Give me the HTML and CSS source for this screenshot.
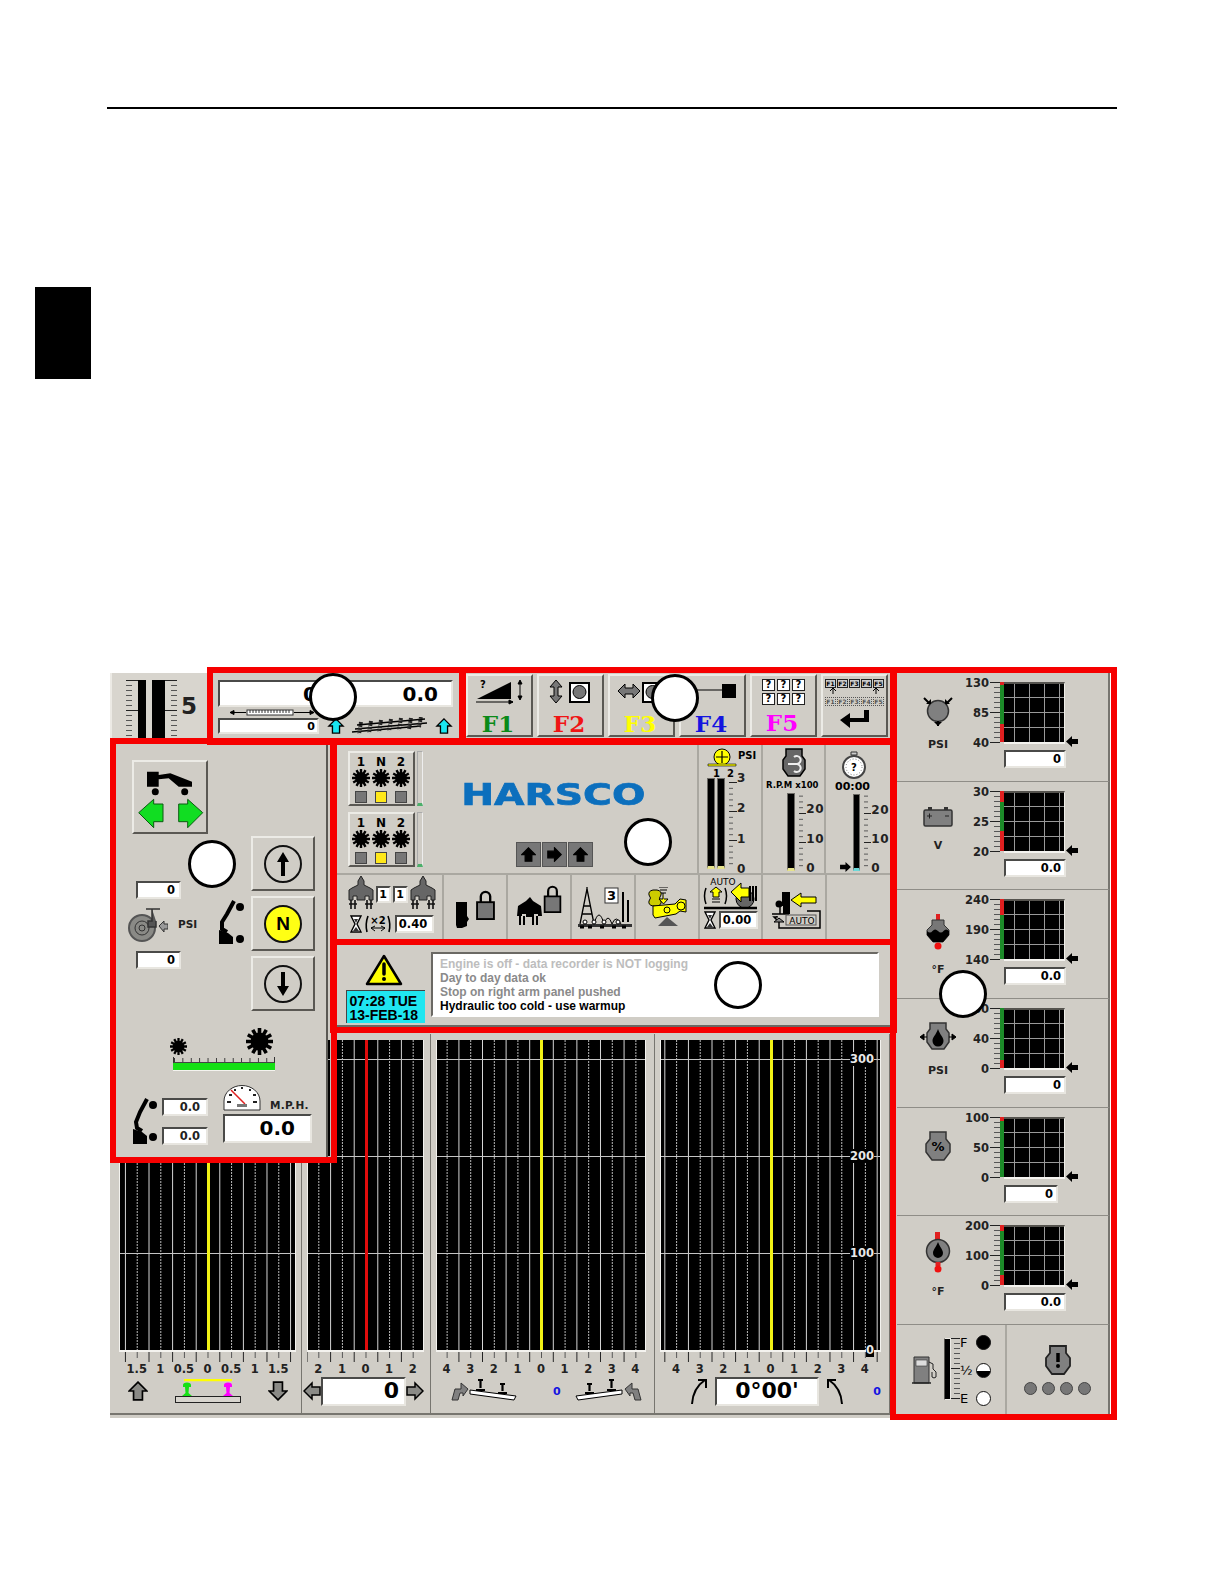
FILE: index.html
```html
<!DOCTYPE html>
<html lang="en">
<head>
    <meta charset="UTF-8">
    <meta name="viewport" content="width=device-width, initial-scale=1.0">
    <title>Operator Display</title>
    <link rel="stylesheet" href="styles.css">
</head>
<body>
    <svg class="defs" width="0" height="0">
        <symbol id="gear" viewBox="-12 -12 24 24">
            <g stroke="#000" stroke-width="3.2">
                <circle r="8" fill="#000" stroke="none"/>
                <path d="M0-12V12M-12 0H12M-6-10.4 6 10.4M6-10.4-6 10.4M-10.4-6 10.4 6M10.4-6-10.4 6"/>
            </g>
        </symbol>
        <symbol id="arrow-up" viewBox="0 0 18 18">
            <path d="M9 1 17 9H13V17H5V9H1Z" stroke="#000" stroke-width="1.5"/>
        </symbol>
        <symbol id="arrow-left" viewBox="0 0 18 18">
            <path d="M1 9 9 1V5H17V13H9V17Z" stroke="#000" stroke-width="1.5"/>
        </symbol>
        <symbol id="pointer" viewBox="0 0 12 11">
            <path d="M0 5.500 6 0V3H12V8H6V11Z" fill="#000"/>
        </symbol>
        <symbol id="hourglass" viewBox="0 0 12 18">
            <path d="M1 1H11L7 9 11 17H1L5 9Z" fill="#fff" stroke="#000" stroke-width="1.4"/>
            <path d="M3 16 6 12 9 16ZM4 4H8L6 8Z" fill="#333"/>
        </symbol>
        <symbol id="tamper" viewBox="0 0 26 36">
            <path d="M13 0 16 5V9L22 12 25 14V24H21V20H17V24H9V20H5V24H1V14L4 12 10 9V5Z" fill="#666" stroke="#222"/>
            <path d="M3 24V33M7 24V33M19 24V33M23 24V33M1 28H9M17 28H25" stroke="#111" stroke-width="1.6"/>
        </symbol>
        <symbol id="padlock" viewBox="0 0 20 32">
            <path d="M5 14V7A5 5 0 0 1 15 7V14" fill="none" stroke="#000" stroke-width="2.5"/>
            <rect x="1" y="13" width="18" height="18" fill="#777" stroke="#000" stroke-width="2"/>
        </symbol>
        <symbol id="rail-tilt" viewBox="0 0 48 24">
            <path d="M1 17 47 11 47 15 3 21Z" fill="#fff" stroke="#000"/>
            <path d="M12 5H17M14.500 5V12M10 14H19M34 1H39M36.500 1V9M32 11H41" stroke="#000" stroke-width="2.2" fill="none"/>
        </symbol>
        <symbol id="lift-arrow" viewBox="0 0 18 19">
            <path d="M1 18 4 7H10V1L17 7 12 14V11H9L7 18Z" fill="#808080" stroke="#333"/>
        </symbol>
    </svg>

    <div class="page-rule"></div>
    <div class="chapter-tab"></div>

    <main class="screen">
        <div class="main-col">
            <div class="top-row">
                <div class="depth-cell">
                    <div class="ticks ticks-left"></div>
                    <div class="bar depth-bar"></div>
                    <div class="bar depth-bar wide"></div>
                    <div class="ticks"></div>
                    <span class="depth-value">5</span>
                </div>
                <div class="measure">
                    <div class="field measure-big"><span class="first-read">0.0</span><span>0.0</span></div>
                    <svg class="tape" width="84" height="7" viewBox="0 0 84 7">
                        <path d="M0 3.500H16M0 3.500 4 1.500V5.500ZM64 3.500H84M84 3.500 80 1.500V5.500Z" stroke="#000"/>
                        <rect x="17" y="1" width="46" height="5" fill="#fff" stroke="#333"/>
                        <path d="M20 1V4M23 1V4M26 1V4M29 1V4M32 1V4M35 1V4M38 1V4M41 1V4M44 1V4M47 1V4M50 1V4M53 1V4M56 1V4M59 1V4" stroke="#333"/>
                    </svg>
                    <div class="measure-low">
                        <div class="field measure-small">0</div>
                        <svg class="cyan-up" width="18" height="16"><use href="#arrow-up" fill="#19e6f0"/></svg>
                        <svg class="rails" width="78" height="18" viewBox="0 0 78 18">
                            <path d="M6 8 74 2M1 15 70 9M4 12 76 6" stroke="#000" stroke-width="1.5" fill="none"/>
                            <path d="M10 5 8 17M20 4 18 16M30 3 28 15M40 2 38 14M50 1 48 13M60 1 58 12M70 0 68 10" stroke="#222" stroke-width="4" stroke-dasharray="2 1"/>
                        </svg>
                        <svg class="cyan-up far" width="18" height="16"><use href="#arrow-up" fill="#19e6f0"/></svg>
                    </div>
                </div>
                <div class="fkeys">
                    <button class="raised fkey" type="button">
                        <svg width="50" height="26" viewBox="0 0 50 26">
                            <path d="M2 20 36 3V20Z" fill="#000"/>
                            <path d="M1 23H38M38 23 34 21V25ZM45 2V20M45 1 43 5H47ZM45 21 43 17H47Z" stroke="#000" fill="#000"/>
                            <text x="5" y="9" class="svg-small">?</text>
                        </svg>
                        <span class="flabel f-green">F1</span>
                    </button>
                    <button class="raised fkey" type="button">
                        <svg width="50" height="26" viewBox="0 0 50 26">
                            <path d="M10 1 16 8H12V17H16L10 24 4 17H8V8H4Z" fill="#777" stroke="#000"/>
                            <rect x="24" y="4" width="19" height="19" fill="#fff" stroke="#000" stroke-width="2"/>
                            <circle cx="33.500" cy="13" r="6.500" fill="#777" stroke="#000"/>
                        </svg>
                        <span class="flabel f-red">F2</span>
                    </button>
                    <button class="raised fkey" type="button">
                        <svg width="50" height="26" viewBox="0 0 50 26">
                            <path d="M1 12 8 5V9H16V5L23 12 16 19V15H8V19Z" fill="#777" stroke="#000"/>
                            <rect x="26" y="4" width="19" height="19" fill="#fff" stroke="#000" stroke-width="2"/>
                            <circle cx="35.500" cy="13" r="6.500" fill="#777" stroke="#000"/>
                        </svg>
                        <span class="flabel f-yellow">F3</span>
                    </button>
                    <button class="raised fkey" type="button">
                        <svg width="50" height="26" viewBox="0 0 50 26">
                            <path d="M0 11H34" stroke="#000"/>
                            <rect x="34" y="5" width="14" height="14" fill="#000"/>
                        </svg>
                        <span class="flabel f-blue">F4</span>
                    </button>
                    <button class="raised fkey" type="button">
                        <div class="qgrid">
                            <span>?</span><span>?</span><span>?</span>
                            <span>?</span><span>?</span><span>?</span>
                        </div>
                        <span class="flabel f-magenta">F5</span>
                    </button>
                    <button class="raised fkey enter" type="button">
                        <div class="mini-row"><span>F1</span><span>F2</span><span>F3</span><span>F4</span><span>F5</span></div>
                        <svg class="mini-arrows" width="58" height="6" viewBox="0 0 58 6"><path d="M7 0V6M4 3 7 0 10 3M50 0V6M47 3 50 0 53 3" stroke="#000" fill="none"/></svg>
                        <div class="mini-row dashed"><span>F1</span><span>F2</span><span>F3</span><span>F4</span><span>F5</span></div>
                        <svg width="30" height="19" viewBox="0 0 30 19"><path d="M29 0V12H10V18L0 10 10 3V8H24V0Z" fill="#000"/></svg>
                    </button>
                </div>
            </div>

            <div class="status-panel">
                <div class="status-top">
                    <div class="selectors">
                        <div class="selector-row">
                            <div class="raised selector">
                                <span>1</span><span>N</span><span>2</span>
                                <svg width="18" height="18"><use href="#gear"/></svg><svg width="18" height="18"><use href="#gear"/></svg><svg width="18" height="18"><use href="#gear"/></svg>
                                <i class="lamp"></i><i class="lamp on"></i><i class="lamp"></i>
                            </div>
                            <div class="strip"></div>
                        </div>
                        <div class="selector-row">
                            <div class="raised selector">
                                <span>1</span><span>N</span><span>2</span>
                                <svg width="18" height="18"><use href="#gear"/></svg><svg width="18" height="18"><use href="#gear"/></svg><svg width="18" height="18"><use href="#gear"/></svg>
                                <i class="lamp"></i><i class="lamp on"></i><i class="lamp"></i>
                            </div>
                            <div class="strip"></div>
                        </div>
                    </div>
                    <div class="brand">
                        <span class="logo">HARSCO</span>
                        <div class="seq">
                            <span class="seq-btn"><svg width="15" height="15"><use href="#arrow-up"/></svg></span>
                            <span class="seq-btn"><svg class="turn" width="15" height="15"><use href="#arrow-up"/></svg></span>
                            <span class="seq-btn"><svg width="15" height="15"><use href="#arrow-up"/></svg></span>
                        </div>
                    </div>
                    <div class="vcell psi-cell">
                        <div class="vhead">
                            <svg width="30" height="19" viewBox="0 0 30 19">
                                <circle cx="15" cy="9" r="8" fill="#ff0" stroke="#000"/>
                                <path d="M15 3V15M9 9H21M1 17.500H29" stroke="#000" stroke-width="1.200"/>
                                <path d="M1 16H29V18H1Z" fill="#ff0" stroke="#000" stroke-width=".6"/>
                            </svg>
                            <b>PSI</b>
                        </div>
                        <div class="bar-nums"><span>1</span><span>2</span></div>
                        <div class="vscale tall">
                            <div class="bar vbar"></div>
                            <div class="bar vbar"></div>
                            <div class="vticks"></div>
                            <div class="vlabels"><span>3</span><span>2</span><span>1</span><span>0</span></div>
                        </div>
                    </div>
                    <div class="vcell rpm-cell">
                        <svg class="rpm-icon" width="24" height="30" viewBox="0 0 24 30">
                            <path d="M4 1H20V8L23 12V21L18 28H6L1 21V12L4 8Z" fill="#666" stroke="#000" stroke-width="1.500"/>
                            <path d="M6 16H15A4 4 0 1 0 12 9M6 16H15A4 4 0 1 1 12 23" fill="none" stroke="#eee" stroke-width="2"/>
                        </svg>
                        <b class="rpm-text">R.P.M x100</b>
                        <div class="vscale">
                            <div class="bar vbar"></div>
                            <div class="vticks"></div>
                            <div class="vlabels thirds"><span>20</span><span>10</span><span>0</span></div>
                        </div>
                    </div>
                    <div class="vcell clock-cell">
                        <svg class="clock-icon" width="26" height="28" viewBox="0 0 26 28">
                            <path d="M10 1H16V4H10Z" fill="#ccc" stroke="#333"/>
                            <circle cx="13" cy="16" r="11" fill="#fff" stroke="#444" stroke-width="2"/>
                            <circle cx="13" cy="16" r="8" fill="none" stroke="#777" stroke-dasharray="1 2"/>
                            <text x="13" y="20" text-anchor="middle" class="svg-small">?</text>
                        </svg>
                        <b class="clock-text">00:00</b>
                        <div class="vscale">
                            <svg class="clock-ptr" width="11" height="10"><g transform="rotate(180 5.500 5)"><use href="#pointer" width="11" height="10"/></g></svg>
                            <div class="bar vbar narrow"></div>
                            <div class="vticks"></div>
                            <div class="vlabels thirds"><span>20</span><span>10</span><span>0</span></div>
                        </div>
                    </div>
                </div>
                <div class="status-bottom">
                    <div class="icell first">
                        <div class="tamp-row">
                            <svg width="26" height="36"><use href="#tamper"/></svg>
                            <span class="field count">1</span><span class="field count">1</span>
                            <svg width="26" height="36"><use href="#tamper"/></svg>
                        </div>
                        <div class="tamp-row low">
                            <svg width="12" height="18"><use href="#hourglass"/></svg>
                            <svg width="28" height="18" viewBox="0 0 28 18">
                                <path d="M4 1Q1 9 3 17M24 1Q27 9 25 17" fill="none" stroke="#000" stroke-width="1.600"/>
                                <path d="M7 13H21M11 11 7 13 11 16M17 11 21 13 17 16" stroke="#000" fill="none"/>
                                <text x="14" y="9" text-anchor="middle" class="svg-small">×2</text>
                            </svg>
                            <span class="field delay">0.40</span>
                        </div>
                    </div>
                    <div class="icell">
                        <svg width="44" height="44" viewBox="0 0 44 44">
                            <path d="M3 17H14V31L16 34 14 37 14 41 9 43H4L3 40Z" fill="#000"/>
                            <use href="#padlock" x="23" y="5" width="19" height="30"/>
                        </svg>
                    </div>
                    <div class="icell">
                        <svg width="50" height="48" viewBox="0 0 50 48">
                            <path d="M16 14 19 18 27 23 28 33H24V31H20V34H12V31H8V33H3L4 23 12 18Z" fill="#000"/>
                            <path d="M6 33V42M10 33V42M19 33V42M23 33V42" stroke="#000" stroke-width="2"/>
                            <use href="#padlock" x="29" y="2" width="19" height="28"/>
                        </svg>
                    </div>
                    <div class="icell nudge">
                        <svg width="56" height="50" viewBox="0 0 56 50">
                            <path d="M9 3 2 38M9 3 16 38M5 20H13M4 28H14M9 3V1" stroke="#000" fill="none" stroke-width="1.300"/>
                            <path d="M16 38Q21 20 26 38Q30 26 34 38Q38 28 43 38" stroke="#000" fill="none"/>
                            <rect x="27" y="2" width="13" height="15" fill="#fff" stroke="#333"/>
                            <text x="33.500" y="14" text-anchor="middle" class="svg-num">3</text>
                            <path d="M45 6 V36M50 14V36" stroke="#000" stroke-width="2"/>
                            <rect x="0" y="38" width="54" height="3" fill="#333"/>
                            <path d="M2 41H6M10 41H14M22 41H26M34 41H38M44 41H48" stroke="#000" stroke-width="3"/>
                            <circle cx="7" cy="36" r="2" fill="#fff" stroke="#000"/><circle cx="16" cy="36" r="2" fill="#fff" stroke="#000"/><circle cx="26" cy="36" r="2" fill="#fff" stroke="#000"/><circle cx="40" cy="36" r="2" fill="#fff" stroke="#000"/>
                        </svg>
                    </div>
                    <div class="icell">
                        <svg width="40" height="40" viewBox="0 0 40 40">
                            <path d="M2 8Q1 4 6 3H10Q15 4 14 8Q11 11 14 14Q15 18 10 19H6Q1 18 2 14Q5 11 2 8Z" fill="#cc0" stroke="#000"/>
                            <path d="M12 0H21M13 3H20M14 6H19M16 6V12H12L16.500 17 21 12H17" stroke="#000" fill="#ff0"/>
                            <path d="M6 19 28 17 33 12 39 13V25L33 24 29 27 8 31 6 28Z" fill="#ff0" stroke="#000"/>
                            <circle cx="20" cy="23" r="3" fill="none" stroke="#000"/><circle cx="34" cy="19" r="4" fill="none" stroke="#000"/>
                            <path d="M20 30 11 39H31Z" fill="#555"/>
                        </svg>
                    </div>
                    <div class="icell auto-cell">
                        <svg width="56" height="34" viewBox="0 0 56 34">
                            <text x="20" y="8" text-anchor="middle" class="svg-auto">AUTO</text>
                            <path d="M3 11Q0 19 3 27M22 11Q25 19 22 27" fill="none" stroke="#000" stroke-width="1.500"/>
                            <path d="M13 10 19 15H16V20H10V15H7Z" fill="#ff0" stroke="#000"/>
                            <path d="M9 22H17M9 25H17" stroke="#000"/>
                            <circle cx="42" cy="22" r="9" fill="#666" stroke="#000"/>
                            <path d="M47 9V24M50 9V24M53 9V24" stroke="#000" stroke-width="2"/>
                            <path d="M28 15 38 6V11H46V20H38V25Z" fill="#ff0" stroke="#000"/>
                            <path d="M1 31H54" stroke="#000" stroke-width="2.500"/>
                        </svg>
                        <div class="tamp-row">
                            <svg width="12" height="18"><use href="#hourglass"/></svg>
                            <span class="field delay">0.00</span>
                        </div>
                    </div>
                    <div class="icell nudge">
                        <svg width="56" height="42" viewBox="0 0 56 42">
                            <path d="M13 2H21V24H14V16H10V12H13Z" fill="#000"/>
                            <circle cx="10" cy="14" r="3.500" fill="#000"/>
                            <path d="M3 24H20M11 17V24" stroke="#000" stroke-width="1.500"/>
                            <path d="M22 10 32 3V7H47V13H32V17Z" fill="#ff0" stroke="#000"/>
                            <path d="M10 32 5 27H8V26M10 28V38H51V21H38" fill="none" stroke="#000" stroke-width="1.500"/>
                            <path d="M10 28 5 32H15Z" fill="#888" stroke="#000"/>
                            <rect x="17" y="25" width="30" height="10" fill="none" stroke="#555"/>
                            <text x="33" y="34" text-anchor="middle" class="svg-auto">AUTO</text>
                        </svg>
                    </div>
                    <div class="icell"></div>
                </div>
            </div>

            <div class="message-panel">
                <div class="clock">
                    <svg width="38" height="32" viewBox="0 0 38 32">
                        <path d="M19 2 36 30H2Z" fill="#ff0" stroke="#000" stroke-width="2.500" stroke-linejoin="round"/>
                        <path d="M19 10V20" stroke="#000" stroke-width="3.500" stroke-linecap="round"/>
                        <circle cx="19" cy="25" r="2" fill="#000"/>
                    </svg>
                    <div class="datetime">07:28 TUE<br>13-FEB-18</div>
                </div>
                <div class="log">
                    <p class="faded">Engine is off - data recorder is NOT logging</p>
                    <p class="dim">Day to day data ok</p>
                    <p class="dim">Stop on right arm panel pushed</p>
                    <p>Hydraulic too cold - use warmup</p>
                </div>
            </div>

            <div class="graphs">
                <section class="gcol gcol-cant">
                    <div class="graph"><i class="needle yellow"></i></div>
                    <div class="scale-ticks"></div>
                    <div class="scale-nums"><span>1.5</span><span>1</span><span>0.5</span><span>0</span><span>0.5</span><span>1</span><span>1.5</span></div>
                    <div class="gfoot">
                        <svg width="20" height="20"><use href="#arrow-up" fill="#8a8a86"/></svg>
                        <svg width="66" height="24" viewBox="0 0 66 24">
                            <path d="M9 1H57" stroke="#ff0" stroke-width="2.500"/>
                            <rect x=".5" y="17.500" width="65" height="6" fill="#d8d5ce" stroke="#222"/>
                            <path d="M8 6A4 2.500 0 0 1 16 6V8H14L13.500 14 17 17H7L10.500 14 10 8H8Z" fill="#16e016"/>
                            <path d="M49 6A4 2.500 0 0 1 57 6V8H55L54.500 14 58 17H48L51.500 14 51 8H49Z" fill="#f0f"/>
                        </svg>
                        <svg class="flip" width="20" height="20"><use href="#arrow-up" fill="#8a8a86"/></svg>
                    </div>
                </section>
                <section class="gcol gcol-align">
                    <div class="graph"><i class="needle red"></i></div>
                    <div class="scale-ticks"></div>
                    <div class="scale-nums"><span>2</span><span>1</span><span>0</span><span>1</span><span>2</span></div>
                    <div class="gfoot">
                        <svg width="18" height="20"><use href="#arrow-left" fill="#8a8a86"/></svg>
                        <div class="field gread align-read">0</div>
                        <svg class="mirror" width="18" height="20"><use href="#arrow-left" fill="#8a8a86"/></svg>
                    </div>
                </section>
                <section class="gcol gcol-twist">
                    <div class="graph"><i class="needle yellow"></i></div>
                    <div class="scale-ticks"></div>
                    <div class="scale-nums"><span>4</span><span>3</span><span>2</span><span>1</span><span>0</span><span>1</span><span>2</span><span>3</span><span>4</span></div>
                    <div class="gfoot">
                        <svg width="18" height="19"><use href="#lift-arrow"/></svg>
                        <svg width="48" height="24"><use href="#rail-tilt" transform="matrix(-1 0 0 1 48 0)"/></svg>
                        <b class="blue-num">0</b>
                        <svg width="48" height="24"><use href="#rail-tilt"/></svg>
                        <svg class="mirror lift-far" width="18" height="19"><use href="#lift-arrow"/></svg>
                    </div>
                </section>
                <section class="gcol gcol-curve">
                    <div class="graph">
                        <i class="needle yellow"></i>
                        <div class="degrees"><span>300</span><span>200</span><span>100</span><span>0</span></div>
                    </div>
                    <div class="scale-ticks"></div>
                    <div class="scale-nums"><span>4</span><span>3</span><span>2</span><span>1</span><span>0</span><span>1</span><span>2</span><span>3</span><span>4</span></div>
                    <div class="gfoot">
                        <svg width="18" height="28" viewBox="0 0 18 28"><path d="M2 27Q3 11 15 3M8 3H16V11" fill="none" stroke="#000" stroke-width="2"/></svg>
                        <div class="field gread curve-read">0°00'</div>
                        <svg class="mirror" width="18" height="28" viewBox="0 0 18 28"><path d="M2 27Q3 11 15 3M8 3H16V11" fill="none" stroke="#000" stroke-width="2"/></svg>
                        <b class="blue-num push">0</b>
                    </div>
                </section>
            </div>
        </div>

        <aside class="side-col">
            <section class="gauge">
                <div class="gauge-id">
                    <svg width="30" height="30" viewBox="0 0 30 30">
                        <circle cx="15" cy="15" r="10.500" fill="#808080" stroke="#333" stroke-width="1.500"/>
                        <path d="M1 2 7 8M29 2 23 8M15 25V30" stroke="#000" stroke-width="2"/>
                        <path d="M3 8H8V3ZM27 8H22V3ZM11 26H19L15 30Z" fill="#000"/>
                    </svg>
                    <b>PSI</b>
                </div>
                <div class="gauge-labels"><span>130</span><span>85</span><span>40</span></div>
                <div class="ticks gauge-ticks"></div>
                <div class="gauge-strip strip-psi"></div>
                <div class="gauge-chart">
                    <div class="chart-row">
                        <div class="chart"></div>
                        <svg class="pointer" width="12" height="11"><use href="#pointer"/></svg>
                    </div>
                    <div class="field gauge-value">0</div>
                </div>
            </section>
            <section class="gauge">
                <div class="gauge-id">
                    <svg width="30" height="22" viewBox="0 0 30 22">
                        <rect x="1" y="5" width="28" height="16" rx="1.500" fill="#808080" stroke="#333" stroke-width="1.500"/>
                        <path d="M5 2H9V5H5ZM21 2H25V5H21Z" fill="#333"/>
                        <path d="M4 11H9M6.500 8.500V13.500M22 11H26" stroke="#222"/>
                    </svg>
                    <b>V</b>
                </div>
                <div class="gauge-labels"><span>30</span><span>25</span><span>20</span></div>
                <div class="ticks gauge-ticks"></div>
                <div class="gauge-strip strip-volt"></div>
                <div class="gauge-chart">
                    <div class="chart-row">
                        <div class="chart"></div>
                        <svg class="pointer" width="12" height="11"><use href="#pointer"/></svg>
                    </div>
                    <div class="field gauge-value">0.0</div>
                </div>
            </section>
            <section class="gauge">
                <div class="gauge-id">
                    <svg width="24" height="38" viewBox="0 0 24 36">
                        <path d="M10 0H14V6H10Z" fill="#e02020"/>
                        <path d="M6 6H18V11L23 16V21L17 28H7L1 21V16L6 11Z" fill="#777" stroke="#333"/>
                        <path d="M1 17Q4 20 6.500 17T12 17T17.500 17T23 17V21L17 28H7L1 21Z" fill="#000"/>
                        <circle cx="12" cy="32" r="3.500" fill="#f01010"/>
                    </svg>
                    <b>°F</b>
                </div>
                <div class="gauge-labels"><span>240</span><span>190</span><span>140</span></div>
                <div class="ticks gauge-ticks"></div>
                <div class="gauge-strip strip-water"></div>
                <div class="gauge-chart">
                    <div class="chart-row">
                        <div class="chart"></div>
                        <svg class="pointer" width="12" height="11"><use href="#pointer"/></svg>
                    </div>
                    <div class="field gauge-value">0.0</div>
                </div>
            </section>
            <section class="gauge">
                <div class="gauge-id">
                    <svg width="36" height="30" viewBox="0 0 36 30">
                        <path d="M10 1H26V7L29 11V20L24 27H12L7 20V11L10 7Z" fill="#808080" stroke="#333" stroke-width="1.500"/>
                        <path d="M18 7C16 13 12.500 15 12.500 19A5.500 5.500 0 0 0 23.500 19C23.500 15 20 13 18 7Z" fill="#000"/>
                        <path d="M0 15 4 12V18ZM36 15 32 12V18ZM3 15H7M33 15H29" fill="#000" stroke="#000"/>
                    </svg>
                    <b>PSI</b>
                </div>
                <div class="gauge-labels"><span>80</span><span>40</span><span>0</span></div>
                <div class="ticks gauge-ticks"></div>
                <div class="gauge-strip strip-oil"></div>
                <div class="gauge-chart">
                    <div class="chart-row">
                        <div class="chart"></div>
                        <svg class="pointer" width="12" height="11"><use href="#pointer"/></svg>
                    </div>
                    <div class="field gauge-value">0</div>
                </div>
            </section>
            <section class="gauge">
                <div class="gauge-id">
                    <svg width="26" height="30" viewBox="0 0 26 30">
                        <path d="M5 1H21V8L25 13V21L19 29H7L1 21V13L5 8Z" fill="#808080" stroke="#333" stroke-width="1.500"/>
                        <text x="13" y="20" text-anchor="middle" class="svg-num">%</text>
                    </svg>
                </div>
                <div class="gauge-labels"><span>100</span><span>50</span><span>0</span></div>
                <div class="ticks gauge-ticks"></div>
                <div class="gauge-strip strip-load"></div>
                <div class="gauge-chart short">
                    <div class="chart-row">
                        <div class="chart"></div>
                        <svg class="pointer" width="12" height="11"><use href="#pointer"/></svg>
                    </div>
                    <div class="field gauge-value">0</div>
                </div>
            </section>
            <section class="gauge">
                <div class="gauge-id tall">
                    <svg width="26" height="42" viewBox="0 0 26 42">
                        <path d="M10 0H15V8H10Z" fill="#e02020"/>
                        <circle cx="13" cy="19" r="11.500" fill="#808080" stroke="#333" stroke-width="1.500"/>
                        <path d="M13 10C11 15 8 18 8 21A5 5 0 0 0 18 21C18 18 15 15 13 10Z" fill="#000"/>
                        <path d="M10.500 30H15.500V34H10.500Z" fill="#e02020"/>
                        <circle cx="13" cy="37" r="3.500" fill="#f01010"/>
                    </svg>
                    <b>°F</b>
                </div>
                <div class="gauge-labels"><span>200</span><span>100</span><span>0</span></div>
                <div class="ticks gauge-ticks"></div>
                <div class="gauge-strip strip-temp"></div>
                <div class="gauge-chart">
                    <div class="chart-row">
                        <div class="chart"></div>
                        <svg class="pointer" width="12" height="11"><use href="#pointer"/></svg>
                    </div>
                    <div class="field gauge-value">0.0</div>
                </div>
            </section>
            <section class="side-bottom">
                <div class="fuel">
                    <svg class="pump" width="26" height="28" viewBox="0 0 26 28">
                        <path d="M2 1H17V27H2Z" fill="#808080" stroke="#333"/>
                        <rect x="4" y="4" width="11" height="6" fill="#ddd" stroke="#333" stroke-width=".6"/>
                        <path d="M0 27H19" stroke="#222" stroke-width="1.500"/>
                        <path d="M17 6 21 8V13L24 16V21Q22 23 20 21V16" fill="none" stroke="#222"/>
                    </svg>
                    <div class="bar fuel-bar"></div>
                    <div class="ticks fuel-ticks"></div>
                    <div class="fuel-levels">
                        <div><span>F</span><i class="dot full"></i></div>
                        <div><span>½</span><i class="dot half"></i></div>
                        <div><span>E</span><i class="dot empty"></i></div>
                    </div>
                </div>
                <div class="faults">
                    <svg width="26" height="30" viewBox="0 0 26 30">
                        <path d="M5 1H21V8L25 13V21L19 29H7L1 21V13L5 8Z" fill="#808080" stroke="#222" stroke-width="1.800"/>
                        <path d="M13 8V17" stroke="#000" stroke-width="3.500"/>
                        <circle cx="13" cy="21" r="2" fill="#000"/>
                    </svg>
                    <div class="fault-dots"><i></i><i></i><i></i><i></i></div>
                </div>
            </section>
        </aside>

        <div class="control-panel">
            <button class="raised travel-btn" type="button">
                <svg width="72" height="70" viewBox="0 0 72 70">
                    <path d="M13 9.700H24.700V13L36.300 11.300 58 19.700V24.700H44.700L34.700 16.300 24.700 17.300V24.700H13Z" fill="#000"/>
                    <circle cx="21.300" cy="29.700" r="3.500" fill="#000"/><circle cx="50.700" cy="29.700" r="3.500" fill="#000"/>
                    <path d="M4.700 50.700 19.700 37.300V42H29V59.700H19.700V65.700Z" fill="#11dd22" stroke="#0a5a10"/>
                    <path d="M68.700 50.700 53.700 37.300V42H44.700V59.700H53.700V65.700Z" fill="#11dd22" stroke="#0a5a10"/>
                </svg>
            </button>
            <div class="control-mid">
                <div class="control-reads">
                    <div class="field read-small">0</div>
                    <div class="psi-row">
                        <svg class="brake" width="40" height="36" viewBox="0 0 40 36">
                            <circle cx="14" cy="21" r="13" fill="#8a8a86" stroke="#555" stroke-width="2"/>
                            <circle cx="14" cy="21" r="7" fill="none" stroke="#333"/>
                            <circle cx="14" cy="21" r="3" fill="none" stroke="#333"/>
                            <path d="M18 2H32M24 2V14H20V20H28V14" fill="#555" stroke="#333" stroke-width="1.500"/>
                            <path d="M31 19 36 14V17H40V22H36V25Z" fill="#999" stroke="#333"/>
                        </svg>
                        <b>PSI</b>
                        <svg class="stick" width="28" height="46" viewBox="0 0 28 46">
                            <path d="M16 2 9 15 4 23 4 30 9 33" fill="none" stroke="#000" stroke-width="4"/>
                            <circle cx="22" cy="8" r="4" fill="#000"/><circle cx="22" cy="40" r="4" fill="#000"/>
                            <path d="M1 31 10 34 15 38V45H1Z" fill="#000"/>
                        </svg>
                    </div>
                    <div class="field read-small">0</div>
                </div>
                <div class="shift-btns">
                    <button class="raised shift" type="button">
                        <span class="ring"><svg width="14" height="24" viewBox="0 0 14 24"><path d="M7 0 13 10H9V24H5V10H1Z" fill="#000"/></svg></span>
                    </button>
                    <button class="raised shift" type="button"><span class="ring neutral">N</span></button>
                    <button class="raised shift" type="button">
                        <span class="ring"><svg class="flip" width="14" height="24" viewBox="0 0 14 24"><path d="M7 0 13 10H9V24H5V10H1Z" fill="#000"/></svg></span>
                    </button>
                </div>
            </div>
            <div class="gear-row">
                <svg width="17" height="17"><use href="#gear"/></svg>
                <svg width="27" height="27"><use href="#gear"/></svg>
            </div>
            <div class="speed-ruler"></div>
            <div class="speed-bar"></div>
            <div class="control-bottom">
                <svg width="26" height="48" viewBox="0 0 26 48">
                    <path d="M14 2 7 15 3 25 4 31 9 34" fill="none" stroke="#000" stroke-width="4"/>
                    <circle cx="20" cy="8" r="4" fill="#000"/><circle cx="20" cy="40" r="4" fill="#000"/>
                    <path d="M0 32 9 35 14 39V47H0Z" fill="#000"/>
                </svg>
                <div class="speed-reads">
                    <div class="field read-mini">0.0</div>
                    <div class="field read-mini">0.0</div>
                </div>
                <div class="mph">
                    <div class="mph-head">
                        <svg width="38" height="27" viewBox="0 0 38 27">
                            <path d="M1 26V17A18 15.500 0 0 1 37 17V26Z" fill="#fff" stroke="#333"/>
                            <path d="M4 18H8M6 11H9M11 6H13M18 4H20M26 6H28M30 11H33M30 18H34" stroke="#222" stroke-width="2"/>
                            <path d="M8 6 22 20" stroke="#e02020" stroke-width="1.500"/>
                            <path d="M14 20H24V23H14Z" fill="#777"/>
                        </svg>
                        <b>M.P.H.</b>
                    </div>
                    <div class="field speed-value">0.0</div>
                </div>
            </div>
        </div>

        <div class="callout box-measure"></div>
        <div class="callout box-keys"></div>
        <div class="callout box-status"></div>
        <div class="callout box-message"></div>
        <div class="callout box-control"></div>
        <div class="callout box-side"></div>
        <i class="marker m1"></i>
        <i class="marker m2"></i>
        <i class="marker m3"></i>
        <i class="marker m4"></i>
        <i class="marker m5"></i>
        <i class="marker m6"></i>
    </main>
</body>
</html>
```

FILE: styles.css
```css
* {
    box-sizing: border-box;
}
body {
    margin: 0;
    width: 1224px;
    height: 1584px;
    overflow: hidden;
    background: #fff;
    font-family: "Liberation Sans", Arial, sans-serif;
    color: #000;
}
.defs {
    position: absolute;
}
svg {
    display: block;
    flex: none;
}
.svg-small {
    font: bold 10px "DejaVu Sans", sans-serif;
}
.svg-num {
    font: bold 13px "DejaVu Sans", sans-serif;
}
.svg-auto {
    font: 9px "DejaVu Sans", sans-serif;
}
.flip {
    transform: scaleY(-1);
}
.mirror {
    transform: scaleX(-1);
}
.turn {
    transform: rotate(90deg);
}

.page-rule {
    margin: 107px 0 0 107px;
    width: 1010px;
    height: 2px;
    background: #000;
}
.chapter-tab {
    margin: 178px 0 0 35px;
    width: 56px;
    height: 92px;
    background: #000;
}

/* the control screen */
.screen {
    position: relative;
    display: flex;
    width: 1000px;
    height: 745px;
    margin: 294px 0 0 110px;
    background: #d0cdc6;
    font-family: "DejaVu Sans", sans-serif;
    font-weight: bold;
}
.main-col {
    width: 780px;
    flex: none;
}
.side-col {
    width: 213px;
    margin-left: 7px;
}
.raised {
    padding: 0;
    background: #d0cdc6;
    border: 2px solid;
    border-color: #ecebe6 #5a5853 #5a5853 #ecebe6;
    font: inherit;
    color: inherit;
}
.field {
    background: #fff;
    border: 2px solid;
    border-color: #4a4a48 #e8e6e0 #e8e6e0 #4a4a48;
    text-align: right;
}
.bar {
    background: #000;
    border: 1px solid #6b6964;
}
.ticks {
    width: 12px;
    background:
        linear-gradient(#222 1px, transparent 1px) 0 0/100% 30px,
        linear-gradient(#555 1px, transparent 1px) 100% 0/6px 5px repeat-y;
}

/* top row */
.top-row {
    display: flex;
    height: 72px;
}
.depth-cell {
    display: flex;
    width: 97px;
    height: 65px;
    padding: 7px 0 0 14px;
    background: #d8d5ce;
    border-left: 2px solid #eceae5;
}
.ticks-left {
    transform: scaleX(-1);
}
.depth-bar {
    width: 8px;
    margin-right: 6px;
    border: none;
}
.depth-bar.wide {
    width: 13px;
    margin-right: 0;
}
.depth-value {
    margin: 13px 0 0 4px;
    font-size: 23px;
    color: #222;
}
.measure {
    width: 246px;
    margin-left: 6px;
    padding: 7px 6px 0 5px;
}
.measure-big {
    display: flex;
    justify-content: space-between;
    height: 27px;
    padding-right: 13px;
    font-size: 20px;
    line-height: 24px;
}
.first-read {
    margin-left: 83px;
}
.tape {
    margin: 2px 0 0 12px;
}
.measure-low {
    display: flex;
    align-items: center;
    margin-top: 1px;
}
.measure-small {
    width: 102px;
    height: 16px;
    padding-right: 2px;
    font-size: 11px;
    line-height: 13px;
}
.cyan-up {
    margin-left: 8px;
}
.rails {
    margin-left: 6px;
}
.cyan-up.far {
    margin-left: 6px;
}
.fkeys {
    display: flex;
    gap: 4px;
    margin: 1px 0 0 7px;
}
.fkey {
    display: flex;
    flex-direction: column;
    align-items: center;
    width: 67px;
    height: 63px;
    padding-top: 3px;
}
.flabel {
    margin: 7px 0 0 -3px;
    font: bold 23px/24px "DejaVu Serif", serif;
}
.f-green { color: #0a8a18; }
.f-red { color: #f01414; }
.f-yellow { color: #ffff00; }
.f-blue { color: #1414e0; }
.f-magenta { color: #ff00ff; }
.qgrid {
    display: grid;
    grid-template-columns: repeat(3, 13px);
    gap: 2px;
    margin-bottom: -1px;
}
.qgrid span {
    height: 12px;
    background: #fff;
    border: 1px solid #222;
    font-size: 10px;
    line-height: 10px;
    text-align: center;
}
.mini-row {
    display: flex;
    gap: 1px;
}
.mini-row span {
    width: 11px;
    height: 9px;
    background: #ccc;
    border: 1px solid #222;
    font-size: 6px;
    line-height: 7px;
    text-align: center;
}
.mini-row.dashed span {
    background: transparent;
    border: 1px dotted #555;
    color: #555;
}
.mini-arrows {
    margin: 0 0 3px;
}
.enter svg:last-child {
    margin-top: 4px;
}

/* status panel */
.status-panel {
    height: 194px;
    margin-left: 227px;
}
.status-top {
    display: flex;
    height: 130px;
    border-bottom: 2px solid #aaa8a1;
}
.selectors {
    width: 86px;
    padding: 6px 0 0 11px;
    flex: none;
}
.selector-row {
    display: flex;
    gap: 2px;
    margin-bottom: 6px;
}
.selector {
    display: grid;
    grid-template-columns: repeat(3, 20px);
    justify-items: center;
    width: 67px;
    height: 55px;
    padding: 3px 1px 0;
    font-weight: bold;
    font-size: 12px;
    line-height: 13px;
}
.selector svg {
    margin-top: -1px;
}
.lamp {
    width: 12px;
    height: 12px;
    margin-top: 2px;
    background: #777;
    border: 1px solid #444;
}
.lamp.on {
    background: #ffe81a;
}
.strip {
    width: 6px;
    height: 55px;
    border: 1px solid #aaa;
    border-right-color: #eee;
    border-bottom: 3px solid #4caf6a;
}
.brand {
    width: 274px;
    padding-top: 39px;
    flex: none;
    display: flex;
    flex-direction: column;
    align-items: center;
}
.logo {
    display: block;
    height: 22px;
    margin-left: -14px;
    font: bold 30px/22px "DejaVu Sans", sans-serif;
    color: #0c6fbd;
    -webkit-text-stroke: .7px #0c6fbd;
    transform: scaleX(1.31);
}
.seq {
    display: flex;
    gap: 1px;
    margin: 36px 0 0 -11px;
}
.seq-btn {
    display: flex;
    align-items: center;
    justify-content: center;
    width: 25px;
    height: 25px;
    background: #777;
    border: 1px solid #555;
}
.vcell {
    flex: none;
    border-left: 2px solid #aaa8a1;
}
.psi-cell {
    width: 64px;
    padding: 3px 0 0 8px;
}
.vhead {
    display: flex;
    font-size: 10px;
    line-height: 14px;
}
.vhead svg {
    margin-right: 1px;
}
.vhead b {
    margin-top: 1px;
}
.bar-nums {
    display: flex;
    gap: 7px;
    margin: 0 0 0 6px;
    font-size: 10px;
    line-height: 13px;
}
.vscale {
    display: flex;
    height: 78px;
}
.vscale.tall {
    height: 91px;
    margin-top: -2px;
}
.vbar {
    width: 8px;
    margin-right: 2px;
    border-bottom: 3px solid #e6e28c;
}
.vbar.narrow {
    width: 7px;
    border-bottom-color: #6cd9d9;
}
.vticks {
    width: 8px;
    margin-left: 2px;
    background:
        linear-gradient(#222 1px, transparent 1px) 0 100%/100% 29px,
        linear-gradient(#555 1px, transparent 1px) 0 100%/4px 5.800px repeat-y;
}
.vlabels {
    display: flex;
    flex-direction: column;
    justify-content: space-between;
    margin: -7px 0;
    font-size: 12px;
    line-height: 14px;
    color: #222;
}
.vlabels.thirds {
    margin: 9px 0 -4px;
    letter-spacing: .5px;
}
.rpm-cell {
    width: 63px;
    padding-top: 3px;
}
.rpm-icon {
    margin-left: 19px;
}
.rpm-text {
    display: block;
    margin: 2px 0 0 3px;
    font-size: 8.500px;
    line-height: 11px;
    white-space: nowrap;
}
.rpm-cell .vscale {
    margin: 2px 0 0 24px;
}
.clock-cell {
    width: 65px;
    padding-top: 6px;
}
.clock-icon {
    margin-left: 15px;
}
.clock-text {
    display: block;
    margin: 1px 0 0 9px;
    font-size: 11px;
    line-height: 13px;
}
.clock-cell .vscale {
    margin: 1px 0 0 14px;
    height: 77px;
}
.clock-ptr {
    margin: 68px 2px 0 0;
}
.status-bottom {
    display: grid;
    grid-template-columns: 101px 64px 64px 64px 64px 63px 64px 64px;
    height: 64px;
    padding-left: 4px;
}
.icell {
    display: flex;
    flex-direction: column;
    align-items: center;
    justify-content: center;
    border-left: 2px solid #aaa8a1;
}
.icell.first {
    border-left: none;
    justify-content: flex-start;
    padding-top: 1px;
}
.icell.nudge {
    padding: 8px 0 0 6px;
}
.auto-cell {
    justify-content: flex-start;
    padding-top: 2px;
}
.tamp-row {
    display: flex;
    align-items: center;
    gap: 2px;
}
.tamp-row.low {
    margin-top: 3px;
}
.count {
    width: 15px;
    height: 17px;
    text-align: center;
    font-size: 11px;
    line-height: 13px;
}
.delay {
    width: 39px;
    height: 18px;
    margin-left: 1px;
    padding-right: 2px;
    font-size: 11.500px;
    line-height: 15px;
    text-align: center;
}

/* message panel */
.message-panel {
    display: flex;
    height: 82px;
    margin: 6px 0 0 227px;
    padding: 7px 11px 0 6px;
    border-bottom: 2px solid #6b6964;
}
.clock {
    width: 87px;
    flex: none;
    display: flex;
    flex-direction: column;
    align-items: center;
}
.clock svg {
    margin: 2px 6px 0 0;
}
.datetime {
    width: 79px;
    height: 33px;
    margin: 4px 3px 0 0;
    padding: 3px 0 0 3px;
    background: #1fe6f0;
    border-left: 1px solid #444;
    border-top: 1px solid #444;
    font: bold 14px/14px "Liberation Sans", sans-serif;
    white-space: nowrap;
}
.log {
    width: 448px;
    height: 65px;
    margin-left: 1px;
    padding: 3px 0 0 7px;
    background: #fff;
    border: 2px solid;
    border-color: #6b6964 transparent transparent #6b6964;
    font: bold 12px/14px "Liberation Sans", sans-serif;
}
.log p {
    margin: 0;
}
.log .faded {
    color: #bdbdbd;
}
.log .dim {
    color: #8a8a8a;
}

/* bottom graphs */
.graphs {
    display: flex;
    height: 381px;
    margin-top: 7px;
}
.gcol {
    flex: none;
    padding-top: 6px;
    border-right: 1px solid #77756f;
    border-bottom: 2px solid #77756f;
}
.gcol-cant { width: 192px; padding-left: 9px; padding-right: 5px; }
.gcol-align { width: 129px; padding-left: 5px; padding-right: 6px; }
.gcol-twist { width: 224px; padding-left: 5px; padding-right: 8px; }
.gcol-curve { width: 235px; padding-left: 5px; padding-right: 8px; }
.graph {
    position: relative;
    height: 312px;
    border: solid #f4f3ef;
    border-width: 0 1px 2px 1px;
    background-color: #000;
    background-image:
        linear-gradient(#c4c4c4 1px, transparent 1px),
        linear-gradient(90deg, #d8d8d8 1px, transparent 1px);
    background-size: 100% 97px, 23.600px 100%;
    background-position: 0 100%, center 0;
}
/* the in-between grid lines are dashed */
.graph::before {
    content: "";
    position: absolute;
    inset: 0;
    background: linear-gradient(90deg, #bdbdbd 1px, transparent 1px) calc(50% + 11.800px) 0/23.600px 100%;
    -webkit-mask: repeating-linear-gradient(#000 0 2px, transparent 2px 3px);
    mask: repeating-linear-gradient(#000 0 2px, transparent 2px 3px);
}
.needle {
    position: absolute;
    top: 0;
    bottom: 0;
    left: 50%;
    width: 3px;
    margin-left: -1px;
}
.needle.yellow { background: #f2f215; }
.needle.red { background: #e00c0c; }
.degrees {
    position: absolute;
    top: 12px;
    right: 6px;
    display: flex;
    flex-direction: column;
    align-items: flex-end;
    gap: 83px;
    font-size: 11.500px;
    line-height: 14px;
    color: #e8e8e8;
}
.degrees span {
    background: #000;
}
.degrees span:last-child {
    margin-bottom: -8px;
}
.scale-ticks {
    height: 10px;
    background:
        linear-gradient(90deg, #222 1px, transparent 1px) center 0/23.600px 100%,
        linear-gradient(90deg, #555 1px, transparent 1px) calc(50% + 11.800px) 0/23.600px 6px repeat-x;
}
.scale-nums {
    display: flex;
    justify-content: center;
    font-size: 11.500px;
    line-height: 14px;
    color: #222;
}
.scale-nums span {
    width: 23.600px;
    flex: none;
    text-align: center;
    white-space: nowrap;
}
.gfoot {
    display: flex;
    align-items: center;
    height: 32px;
    margin-top: -1px;
}
.gcol-cant .gfoot {
    justify-content: space-between;
    padding: 0 8px 0 9px;
}
.gcol-align .gfoot {
    margin-left: -4px;
}
.gcol-twist .gfoot {
    padding-left: 15px;
}
.gcol-curve .gfoot {
    padding-left: 30px;
}
.gread {
    height: 29px;
    font-size: 22px;
    line-height: 24px;
}
.align-read {
    width: 90px;
    padding-right: 5px;
}
.curve-read {
    width: 104px;
    margin: 0 7px;
    text-align: center;
}
.blue-num {
    margin: 0 14px 0 36px;
    font-size: 11px;
    color: #1414e0;
}
.blue-num.push {
    margin: 0 0 0 auto;
}
.lift-far {
    margin-left: 1px;
}

/* right side gauges */
.gauge {
    display: flex;
    height: 108.700px;
    padding-top: 9px;
    border-bottom: 1px solid #8f8d87;
    border-right: 2px solid #77756f;
}
.gauge-id {
    display: flex;
    flex-direction: column;
    align-items: center;
    gap: 12px;
    width: 58px;
    height: 76px;
    margin-left: 12px;
    padding-top: 14px;
    flex: none;
    font-size: 11px;
    color: #222;
}
.gauge-id.tall {
    padding-top: 7px;
    gap: 11px;
}
.gauge-labels {
    display: flex;
    flex-direction: column;
    justify-content: space-between;
    align-items: flex-end;
    width: 22px;
    height: 74px;
    margin-top: -6px;
    font-size: 11.500px;
    line-height: 14px;
    color: #222;
}
.gauge-ticks {
    width: 10px;
    height: 61px;
    margin-left: 1px;
}
.gauge-strip {
    width: 4px;
    height: 60px;
}
.strip-psi { background: linear-gradient(#e02020 3px, #1c8a28 3px, #1c8a28 42px, #e02020 42px); }
.strip-volt { background: linear-gradient(#e02020 11px, #1c8a28 11px, #1c8a28 40px, #e02020 40px); }
.strip-water { background: linear-gradient(#e02020 16px, #1c8a28 16px); }
.strip-oil { background: linear-gradient(#1c8a28 52px, #e02020 52px); }
.strip-load { background: linear-gradient(#e02020 4px, #1c8a28 4px); }
.strip-temp { background: linear-gradient(#e02020 6px, #1c8a28 6px, #1c8a28 50px, #e02020 50px); }
.gauge-chart {
    width: 74px;
}
.chart-row {
    display: flex;
    align-items: flex-end;
}
.chart {
    width: 61px;
    height: 60px;
    border-top: 2px solid #55534e;
    border-right: 1px solid #f0efe9;
    background-color: #000;
    background-image:
        linear-gradient(#999 1px, transparent 1px),
        linear-gradient(90deg, #999 1px, transparent 1px);
    background-size: 15px 15px;
    background-position: 0 13px, 10px 0;
    box-shadow: 0 2px 0 #f4f3ef;
}
.pointer {
    margin: 0 0 -5px 1px;
}
.gauge-value {
    width: 62px;
    height: 18px;
    margin-top: 8px;
    padding-right: 3px;
    font-size: 11.500px;
    line-height: 14px;
}
.short .gauge-value {
    width: 54px;
}
.side-bottom {
    display: grid;
    grid-template-columns: 110px 1fr;
    height: 92px;
    border-right: 2px solid #77756f;
    border-bottom: 2px solid #77756f;
}
.fuel {
    display: flex;
    padding: 10px 0 0 15px;
    border-right: 2px solid #aaa8a1;
    font-weight: normal;
}
.pump {
    margin: 21px 6px 0 0;
}
.fuel-bar {
    width: 7px;
    height: 62px;
    margin-top: 3px;
    border-color: #eceae5 #eceae5 #eceae5 #55534e;
}
.fuel-ticks {
    width: 9px;
    height: 61px;
    margin-top: 3px;
}
.fuel-levels {
    display: flex;
    flex-direction: column;
    gap: 13px;
}
.fuel-levels div {
    display: flex;
    align-items: center;
    justify-content: space-between;
    width: 31px;
    font-size: 13px;
    line-height: 15px;
}
.dot {
    width: 15px;
    height: 15px;
    border: 1px solid #111;
    border-radius: 50%;
}
.dot.full { background: #000; }
.dot.half { background: linear-gradient(#fff 50%, #000 50%); }
.dot.empty { background: #fff; }
.faults {
    display: flex;
    flex-direction: column;
    align-items: center;
    padding-top: 20px;
}
.fault-dots {
    display: flex;
    gap: 5px;
    margin-top: 7px;
}
.fault-dots i {
    width: 13px;
    height: 13px;
    background: #777;
    border: 1px solid #444;
    border-radius: 50%;
}

/* control panel sits over the first two graphs */
.control-panel {
    position: absolute;
    top: 72px;
    left: 6px;
    width: 212px;
    height: 412px;
    padding-top: 15px;
    background: #d0cdc6;
    border-right: 2px solid #5a5853;
}
.travel-btn {
    display: flex;
    align-items: center;
    justify-content: center;
    width: 76px;
    height: 74px;
    margin-left: 16px;
}
.control-mid {
    display: flex;
    margin-top: 2px;
}
.control-reads {
    width: 135px;
    padding: 45px 0 0 20px;
}
.read-small {
    width: 45px;
    height: 18px;
    padding-right: 4px;
    font-size: 11.500px;
    line-height: 14px;
}
.psi-row {
    display: flex;
    height: 52px;
    margin-left: -8px;
    font-size: 10.500px;
    color: #222;
}
.psi-row .brake {
    margin-top: 8px;
}
.psi-row b {
    margin: 19px 0 0 10px;
}
.psi-row .stick {
    margin-left: 21px;
}
.shift-btns {
    display: flex;
    flex-direction: column;
    gap: 5px;
}
.shift {
    display: flex;
    align-items: center;
    justify-content: center;
    width: 64px;
    height: 55px;
}
.ring {
    display: flex;
    align-items: center;
    justify-content: center;
    width: 38px;
    height: 38px;
    border: 2px solid #111;
    border-radius: 50%;
}
.neutral {
    background: #ffff14;
    font: bold 19px "Liberation Sans", sans-serif;
}
.gear-row {
    display: flex;
    align-items: flex-end;
    justify-content: space-between;
    width: 103px;
    height: 27px;
    margin: 17px 0 0 54px;
}
.speed-ruler {
    width: 102px;
    height: 6px;
    margin: 2px 0 0 57px;
    border-left: 1px solid #333;
    border-right: 1px solid #333;
    border-bottom: 1px solid #444;
    background: linear-gradient(90deg, #333 1px, transparent 1px) 0 100%/8.400px 4px repeat-x;
}
.speed-bar {
    width: 102px;
    height: 7px;
    margin-left: 57px;
    background: #14e014;
    box-shadow: 0 1px 0 #f4f3ef;
}
.control-bottom {
    display: flex;
    margin: 22px 0 0 17px;
}
.control-bottom > svg {
    margin-top: 5px;
}
.speed-reads {
    display: flex;
    flex-direction: column;
    gap: 11px;
    margin: 6px 0 0 3px;
}
.read-mini {
    width: 46px;
    height: 18px;
    padding-right: 6px;
    font-size: 11.500px;
    line-height: 14px;
    color: #222;
}
.mph {
    width: 88px;
    margin: -13px 0 0 15px;
}
.mph-head {
    display: flex;
    align-items: flex-end;
    gap: 9px;
    height: 32px;
    font-size: 10.500px;
    color: #222;
    letter-spacing: .3px;
}
.speed-value {
    width: 89px;
    height: 29px;
    margin-top: 3px;
    padding-right: 15px;
    font-size: 20px;
    line-height: 24px;
}

/* red callouts and number markers drawn over the screenshot */
.callout {
    position: absolute;
    border: 6px solid #f60000;
    pointer-events: none;
}
.box-measure { left: 97px; top: -6px; width: 259px; height: 78px; }
.box-keys { left: 349px; top: -6px; width: 438px; height: 78px; }
.box-status { left: 220px; top: 65px; width: 567px; height: 207px; }
.box-message { left: 220px; top: 266px; width: 567px; height: 94px; }
.box-control { left: 0; top: 65px; width: 227px; height: 425px; }
.box-side { left: 780px; top: -6px; width: 227px; height: 753px; }
.marker {
    position: absolute;
    width: 48px;
    height: 48px;
    background: #fff;
    border: 3px solid #000;
    border-radius: 50%;
}
.m1 { left: 199px; top: 0; }
.m2 { left: 541px; top: 1px; }
.m3 { left: 78px; top: 167px; }
.m4 { left: 514px; top: 145px; }
.m5 { left: 604px; top: 288px; }
.m6 { left: 829px; top: 297px; }
```
